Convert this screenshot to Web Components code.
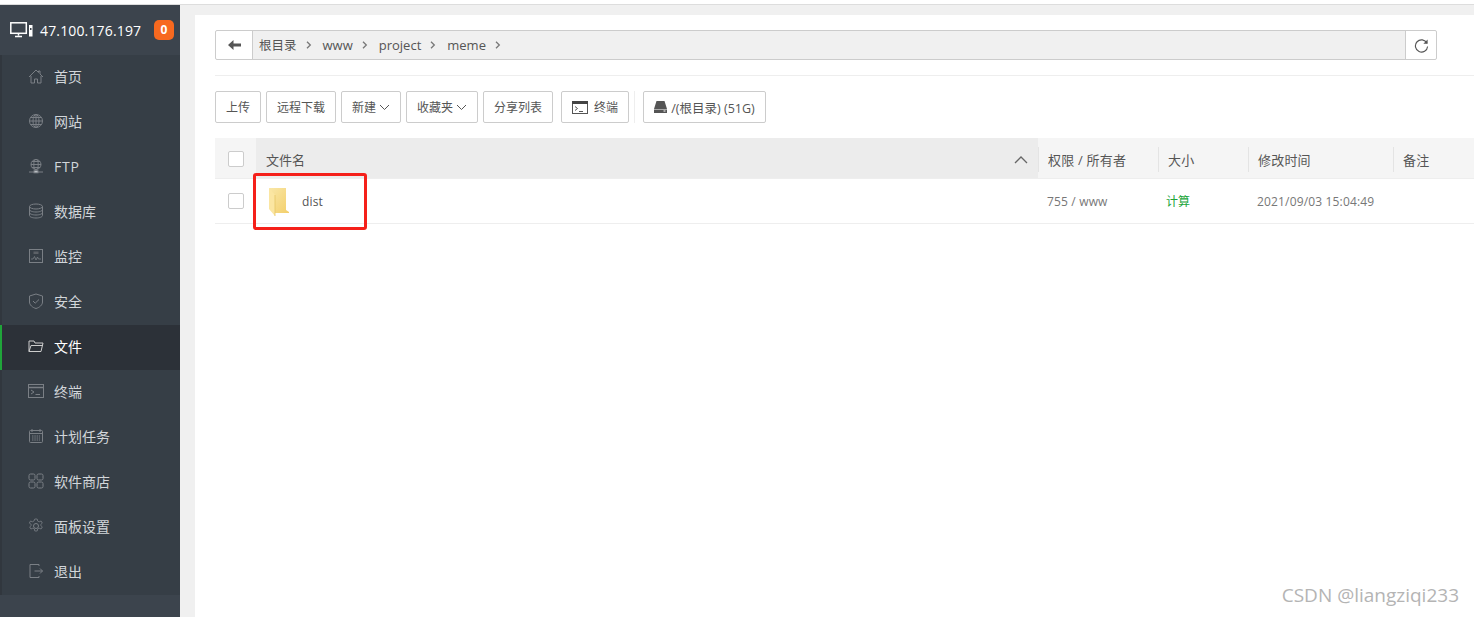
<!DOCTYPE html>
<html lang="zh">
<head>
<meta charset="utf-8">
<title>文件</title>
<style>
  html, body { margin: 0; height: 617px; overflow: hidden; background: #fff; }
  body { font-family: "Open Sans", "Noto Sans CJK SC", sans-serif; font-size: 12px; color: #555; }
</style>
</head>
<body>
<panel-app></panel-app>

<script>
const ICONS = {
  home: '<path d="M1 9 8 2l2.500 2.500V3H12v3l3 3M3 8v7h3.500v-4h3v4H13V8" />',
  globe: '<circle cx="8" cy="8" r="6.500"/><ellipse cx="8" cy="8" rx="3" ry="6.500"/><path d="M1.500 8h13M2.500 4.500h11M2.500 11.500h11M8 1.500v13"/>',
  ftp: '<circle cx="8" cy="6.500" r="5"/><ellipse cx="8" cy="6.500" rx="2.200" ry="5"/><path d="M3 6.500h10M4 3.500h8M4 9.500h8M8 11.500v2M1 14h14"/><rect x="6" y="12.800" width="4" height="2" fill="currentColor"/>',
  db: '<ellipse cx="8" cy="3.500" rx="6.500" ry="2.500"/><path d="M1.500 3.500v9c0 1.400 2.900 2.500 6.500 2.500s6.500-1.100 6.500-2.500v-9M1.500 6.500c0 1.400 2.900 2.500 6.500 2.500s6.500-1.100 6.500-2.500M1.500 9.500c0 1.400 2.900 2.500 6.500 2.500s6.500-1.100 6.500-2.500"/>',
  monitor: '<rect x="1.500" y="1.500" width="13" height="13"/><path d="M3 11h2l1.500-2.500L8 12l1.500-3 1 2H13" stroke-width=".8"/><rect x="5.500" y="3.500" width="5" height="2.500" fill="#5c6167" stroke="none"/>',
  shield: '<path d="M8 1 14.500 3v6c0 3-3 5.500-6.500 6.500C4.500 14.500 1.500 12 1.500 9V3Z"/><path d="m5 8 2.200 2.200L11 6.500"/>',
  folder: '<path d="M1 13.500V3h5l1 2h8l-2 8.500Zm2-6h12"/><path d="M1 13.500 3 7.500"/>',
  term: '<rect x=".5" y="1.500" width="15" height="13"/><path d="M.5 4.500h15" stroke-width="1.500"/><path d="m3 7 3 2-3 2M7.500 11.500H12"/>',
  cron: '<rect x="1.500" y="2.500" width="13" height="12" rx="1"/><path d="M4 1v3M12 1v3M1.500 5.500h13"/><path d="M4 8h8M4 10h8M4 12h8" stroke-dasharray="1.500 .8"/>',
  shop: '<rect x="1" y="1" width="6" height="6" rx="1.500"/><rect x="9" y="1" width="6" height="6" rx="1.500"/><rect x="1" y="9" width="6" height="6" rx="1.500"/><rect x="9" y="9" width="6" height="6" rx="1.500"/>',
  gear: '<circle cx="8" cy="8" r="2.500"/><path d="M6.800 1h2.400l.4 2 1.600.8 1.900-.8 1.200 2.100-1.500 1.300v1.200l1.500 1.300-1.200 2.100-1.900-.8-1.600.8-.4 2H6.800l-.4-2-1.600-.8-1.900.8-1.200-2.100 1.500-1.300V6.400L1.300 5.100l1.200-2.100 1.900.8 1.600-.8Z" stroke-width=".8"/>',
  logout: '<path d="M11 3V1.500H2v13h9V13M6.500 8h8M12 5.500 14.500 8 12 10.500"/>'
};

const navTemplate = document.createElement("template");
navTemplate.innerHTML = `
  <style>
    :host { display: flex; align-items: center; height: 45px; box-sizing: border-box; border-left: 2px solid #31373e; padding: 0 0 3px 26px; color: #d2d6da; font-size: 14px; }
    :host([active]) { background: #2c3138; border-left-color: #20a53a; color: #fff; }
    svg { width: 16px; height: 16px; fill: none; stroke: #7a7f85; stroke-width: 1; margin-right: 10px; flex: none; }
    :host([active]) svg { stroke: #ccc; }
  </style>
  <svg viewBox="0 0 16 16"></svg><slot></slot>
`;
class NavItem extends HTMLElement {
  constructor() {
    super();
    this.attachShadow({ mode: "open" });
    this.shadowRoot.appendChild(navTemplate.content.cloneNode(true));
    this.shadowRoot.querySelector("svg").innerHTML = ICONS[this.getAttribute("icon")];
  }
}
customElements.define("nav-item", NavItem);

class SideBar extends HTMLElement {
  constructor() {
    super();
    this.attachShadow({ mode: "open" }).innerHTML = `
      <style>
        :host { display: flex; flex-direction: column; width: 180px; flex: none; background: #3c444d; }
        .head { display: flex; align-items: center; height: 50px; padding: 0 6px 0 10px; color: #fff; font-size: 14px; }
        .head svg { width: 23px; height: 16px; margin-right: 7px; flex: none; }
        .num { flex: 1; letter-spacing: .15px; }
        .badge { width: 20px; height: 20px; line-height: 20px; border-radius: 5px; background: #f7691f; color: #fff; text-align: center; font-weight: 700; font-size: 12px; }
        nav { background: #363e46; }
      </style>
      <div class="head">
        <svg viewBox="0 0 23 16" fill="none" stroke="#fff" stroke-width="1.500">
          <rect x=".8" y=".8" width="15.500" height="10.500"/><path d="M8.500 11.500v2M5 14.500h7"/>
          <rect x="19" y="3" width="3.500" height="11.500" fill="#fff" stroke="none"/><rect x="20" y="6" width="1.500" height="2" fill="#3c444d" stroke="none"/>
        </svg>
        <span class="num">47.100.176.197</span>
        <span class="badge">0</span>
      </div>
      <nav><slot></slot></nav>`;
  }
}
customElements.define("side-bar", SideBar);

class PathBar extends HTMLElement {
  constructor() {
    super();
    const crumbs = ["根目录", "www", "project", "meme"];
    const chevron = '<svg class="sep" viewBox="0 0 6 8" fill="none" stroke="#777" stroke-width="1.300"><path d="m1 .8 3.300 3.200L1 7.200"/></svg>';
    this.attachShadow({ mode: "open" }).innerHTML = `
      <style>
        :host { display: flex; height: 30px; margin-right: 37px; box-sizing: border-box; border: 1px solid #ccc; border-radius: 2px; color: #555; font-size: 13px; }
        .back { width: 36px; flex: none; display: flex; align-items: center; justify-content: center; border-right: 1px solid #ccc; }
        .back svg { width: 13px; height: 10px; }
        .path { flex: 1; background: #f0f0f0; display: flex; align-items: center; padding: 0 0 1px 6px; }
        .path span:first-child { font-size: 12.500px; }
        .sep { width: 6px; height: 8px; margin: 0 11px 0 9px; }
        .reload { width: 30px; flex: none; display: flex; align-items: center; justify-content: center; border-left: 1px solid #ccc; }
        .reload svg { width: 15px; height: 15px; }
      </style>
      <div class="back"><svg viewBox="0 0 13 10" fill="#555"><path d="M5.500 0v3.500H13v3H5.500V10L0 5Z"/></svg></div>
      <div class="path">${crumbs.map(c => `<span>${c}</span>${chevron}`).join("")}</div>
      <div class="reload"><svg viewBox="0 0 16 16" fill="none" stroke="#555" stroke-width="1.200"><path d="M13.800 5.500A6.500 6.500 0 1 0 14.500 9"/><path d="M14.500 1.500v4.500H10" fill="#555" stroke="none"/></svg></div>`;
  }
}
customElements.define("path-bar", PathBar);

class ToolBtn extends HTMLElement {
  constructor() {
    super();
    this.attachShadow({ mode: "open" }).innerHTML = `
      <style>
        :host { display: inline-flex; align-items: center; justify-content: center; height: 32px; box-sizing: border-box; border: 1px solid #ccc; border-radius: 2px; background: #fff; color: #555; font-size: 12px; white-space: nowrap; }
      </style>
      <slot></slot>`;
  }
}
customElements.define("tool-btn", ToolBtn);

class ToolBar extends HTMLElement {
  constructor() {
    super();
    const caret = '<svg style="width:11px;height:7px;margin-left:3px" viewBox="0 0 11 7" fill="none" stroke="#555"><path d="m1 1 4.500 4.500L10 1"/></svg>';
    this.attachShadow({ mode: "open" }).innerHTML = `
      <style>
        :host { display: flex; gap: 5px; align-items: center; height: 32px; }
        .rule { width: 1px; height: 32px; background: #eee; margin-right: 3px; }
      </style>
      <tool-btn style="width:46px">上传</tool-btn>
      <tool-btn style="width:70px">远程下载</tool-btn>
      <tool-btn style="width:60px">新建${caret}</tool-btn>
      <tool-btn style="width:72px">收藏夹${caret}</tool-btn>
      <tool-btn style="width:70px">分享列表</tool-btn>
      <tool-btn style="width:68px;margin-left:3px">
        <svg style="width:16px;height:13px;margin-right:6px" viewBox="0 0 16 13" fill="none" stroke="#555"><rect x=".5" y=".5" width="15" height="12"/><rect x="0" y="0" width="16" height="3" fill="#444" stroke="none"/><path d="m3 5.500 2.500 2L3 9.500M7 10.500h4"/></svg>终端
      </tool-btn>
      <div class="rule"></div>
      <tool-btn style="width:123px;font-size:12.500px">
        <svg style="width:13px;height:12px;margin-right:4px" viewBox="0 0 13 12" fill="#555"><path d="M2.500 0h8L13 8H0Z"/><path d="M0 8.500h13V12H0Z"/><rect x="9.500" y="9.500" width="2" height="1" fill="#fff"/></svg>/(根目录) (51G)
      </tool-btn>`;
  }
}
customElements.define("tool-bar", ToolBar);

class CheckBox extends HTMLElement {
  constructor() {
    super();
    this.attachShadow({ mode: "open" }).innerHTML = `
      <style>:host { display: block; width: 16px; height: 16px; box-sizing: border-box; border: 1px solid #ccc; border-radius: 2px; background: #fff; }</style>`;
  }
}
customElements.define("check-box", CheckBox);

class FileTable extends HTMLElement {
  constructor() {
    super();
    this.attachShadow({ mode: "open" }).innerHTML = `
      <style>
        :host { display: block; position: relative; font-size: 13px; color: #555; }
        .grid { display: grid; grid-template-columns: 41px 782px 120px 90px 145px 1fr; }
        .head { height: 41px; background: #f5f5f5; border-bottom: 1px solid #eee; box-sizing: border-box; }
        .head > div { display: flex; align-items: center; padding: 3px 0 0 10px; position: relative; color: #555; }
        .head > div.rule { letter-spacing: .2px; }
        .head > div.rule::before { content: ""; position: absolute; left: 0; top: 9px; bottom: 6px; width: 1px; background: #e4e4e4; }
        .head .check { padding: 2px 0 0 13px; }
        .head .name { background: #ececec; justify-content: space-between; padding-right: 10px; }
        .row { height: 45px; border-bottom: 1px solid #eee; box-sizing: border-box; font-size: 12px; color: #777; }
        .row > div { display: flex; align-items: center; padding-left: 9px; letter-spacing: .16px; }
        .row .check { padding-left: 13px; }
        .row .name { padding-left: 13px; color: #555; }
        .row .name svg { width: 20px; height: 29px; margin-right: 13px; }
        .row .size { color: #20a53a; padding-left: 8px; letter-spacing: 0; }
        .mark { position: absolute; left: 38px; top: 35px; width: 114px; height: 57px; box-sizing: border-box; border: 3px solid #f5201a; border-radius: 3px; }
      </style>
      <div class="grid head">
        <div class="check"><check-box></check-box></div>
        <div class="name"><span>文件名</span><svg width="14" height="8" viewBox="0 0 14 8" fill="none" stroke="#666" stroke-width="1.300"><path d="m1 7 6-6 6 6"/></svg></div>
        <div class="rule">权限 / 所有者</div>
        <div class="rule">大小</div>
        <div class="rule">修改时间</div>
        <div class="rule">备注</div>
      </div>
      <div class="grid row">
        <div class="check"><check-box></check-box></div>
        <div class="name">
          <svg viewBox="0 0 20 29">
            <defs><linearGradient id="fb" x1="0" x2="1" y1="0" y2="1"><stop offset="0" stop-color="#f9e7a8"/><stop offset="1" stop-color="#f3cf6b"/></linearGradient></defs>
            <path d="M0 1h17v22l3 2v1H6Z" fill="url(#fb)"/>
            <path d="M0 1v21l6 7V8Z" fill="#fbe6a2"/>
            <path d="M6 8v21" stroke="#e6c566" stroke-width=".8"/>
          </svg>
          dist
        </div>
        <div>755 / www</div>
        <div class="size">计算</div>
        <div>2021/09/03 15:04:49</div>
        <div></div>
      </div>
      <div class="mark"></div>`;
  }
}
customElements.define("file-table", FileTable);

class PanelApp extends HTMLElement {
  constructor() {
    super();
    this.attachShadow({ mode: "open" }).innerHTML = `
      <style>
        :host { display: block; position: relative; height: 617px; background: #fff; }
        .top { height: 4px; border-bottom: 1px solid #ddd; }
        .body { display: flex; height: 612px; }
        .main { flex: 1; background: #f0f0f0; padding: 10px 0 0 15px; display: flex; min-width: 0; }
        .panel { flex: 1; background: #fff; padding: 15px 0 0 20px; min-width: 0; }
        hr { border: 0; height: 1px; background: #eee; margin: 15px 0; }
        tool-bar { margin-bottom: 15px; }
        .mark { position: absolute; right: 15px; bottom: 9px; color: #b4b4b4; font: 19px "Open Sans", sans-serif; }
      </style>
      <div class="top"></div>
      <div class="body">
        <side-bar>
          <nav-item icon="home">首页</nav-item>
          <nav-item icon="globe">网站</nav-item>
          <nav-item icon="ftp"><span style="letter-spacing:.8px">FTP</span></nav-item>
          <nav-item icon="db">数据库</nav-item>
          <nav-item icon="monitor">监控</nav-item>
          <nav-item icon="shield">安全</nav-item>
          <nav-item icon="folder" active>文件</nav-item>
          <nav-item icon="term">终端</nav-item>
          <nav-item icon="cron">计划任务</nav-item>
          <nav-item icon="shop">软件商店</nav-item>
          <nav-item icon="gear">面板设置</nav-item>
          <nav-item icon="logout">退出</nav-item>
        </side-bar>
        <div class="main">
          <div class="panel">
            <path-bar></path-bar>
            <hr>
            <tool-bar></tool-bar>
            <file-table></file-table>
          </div>
        </div>
      </div>
      <div class="mark">CSDN @liangziqi233</div>`;
  }
}
customElements.define("panel-app", PanelApp);
</script>
</body>
</html>
